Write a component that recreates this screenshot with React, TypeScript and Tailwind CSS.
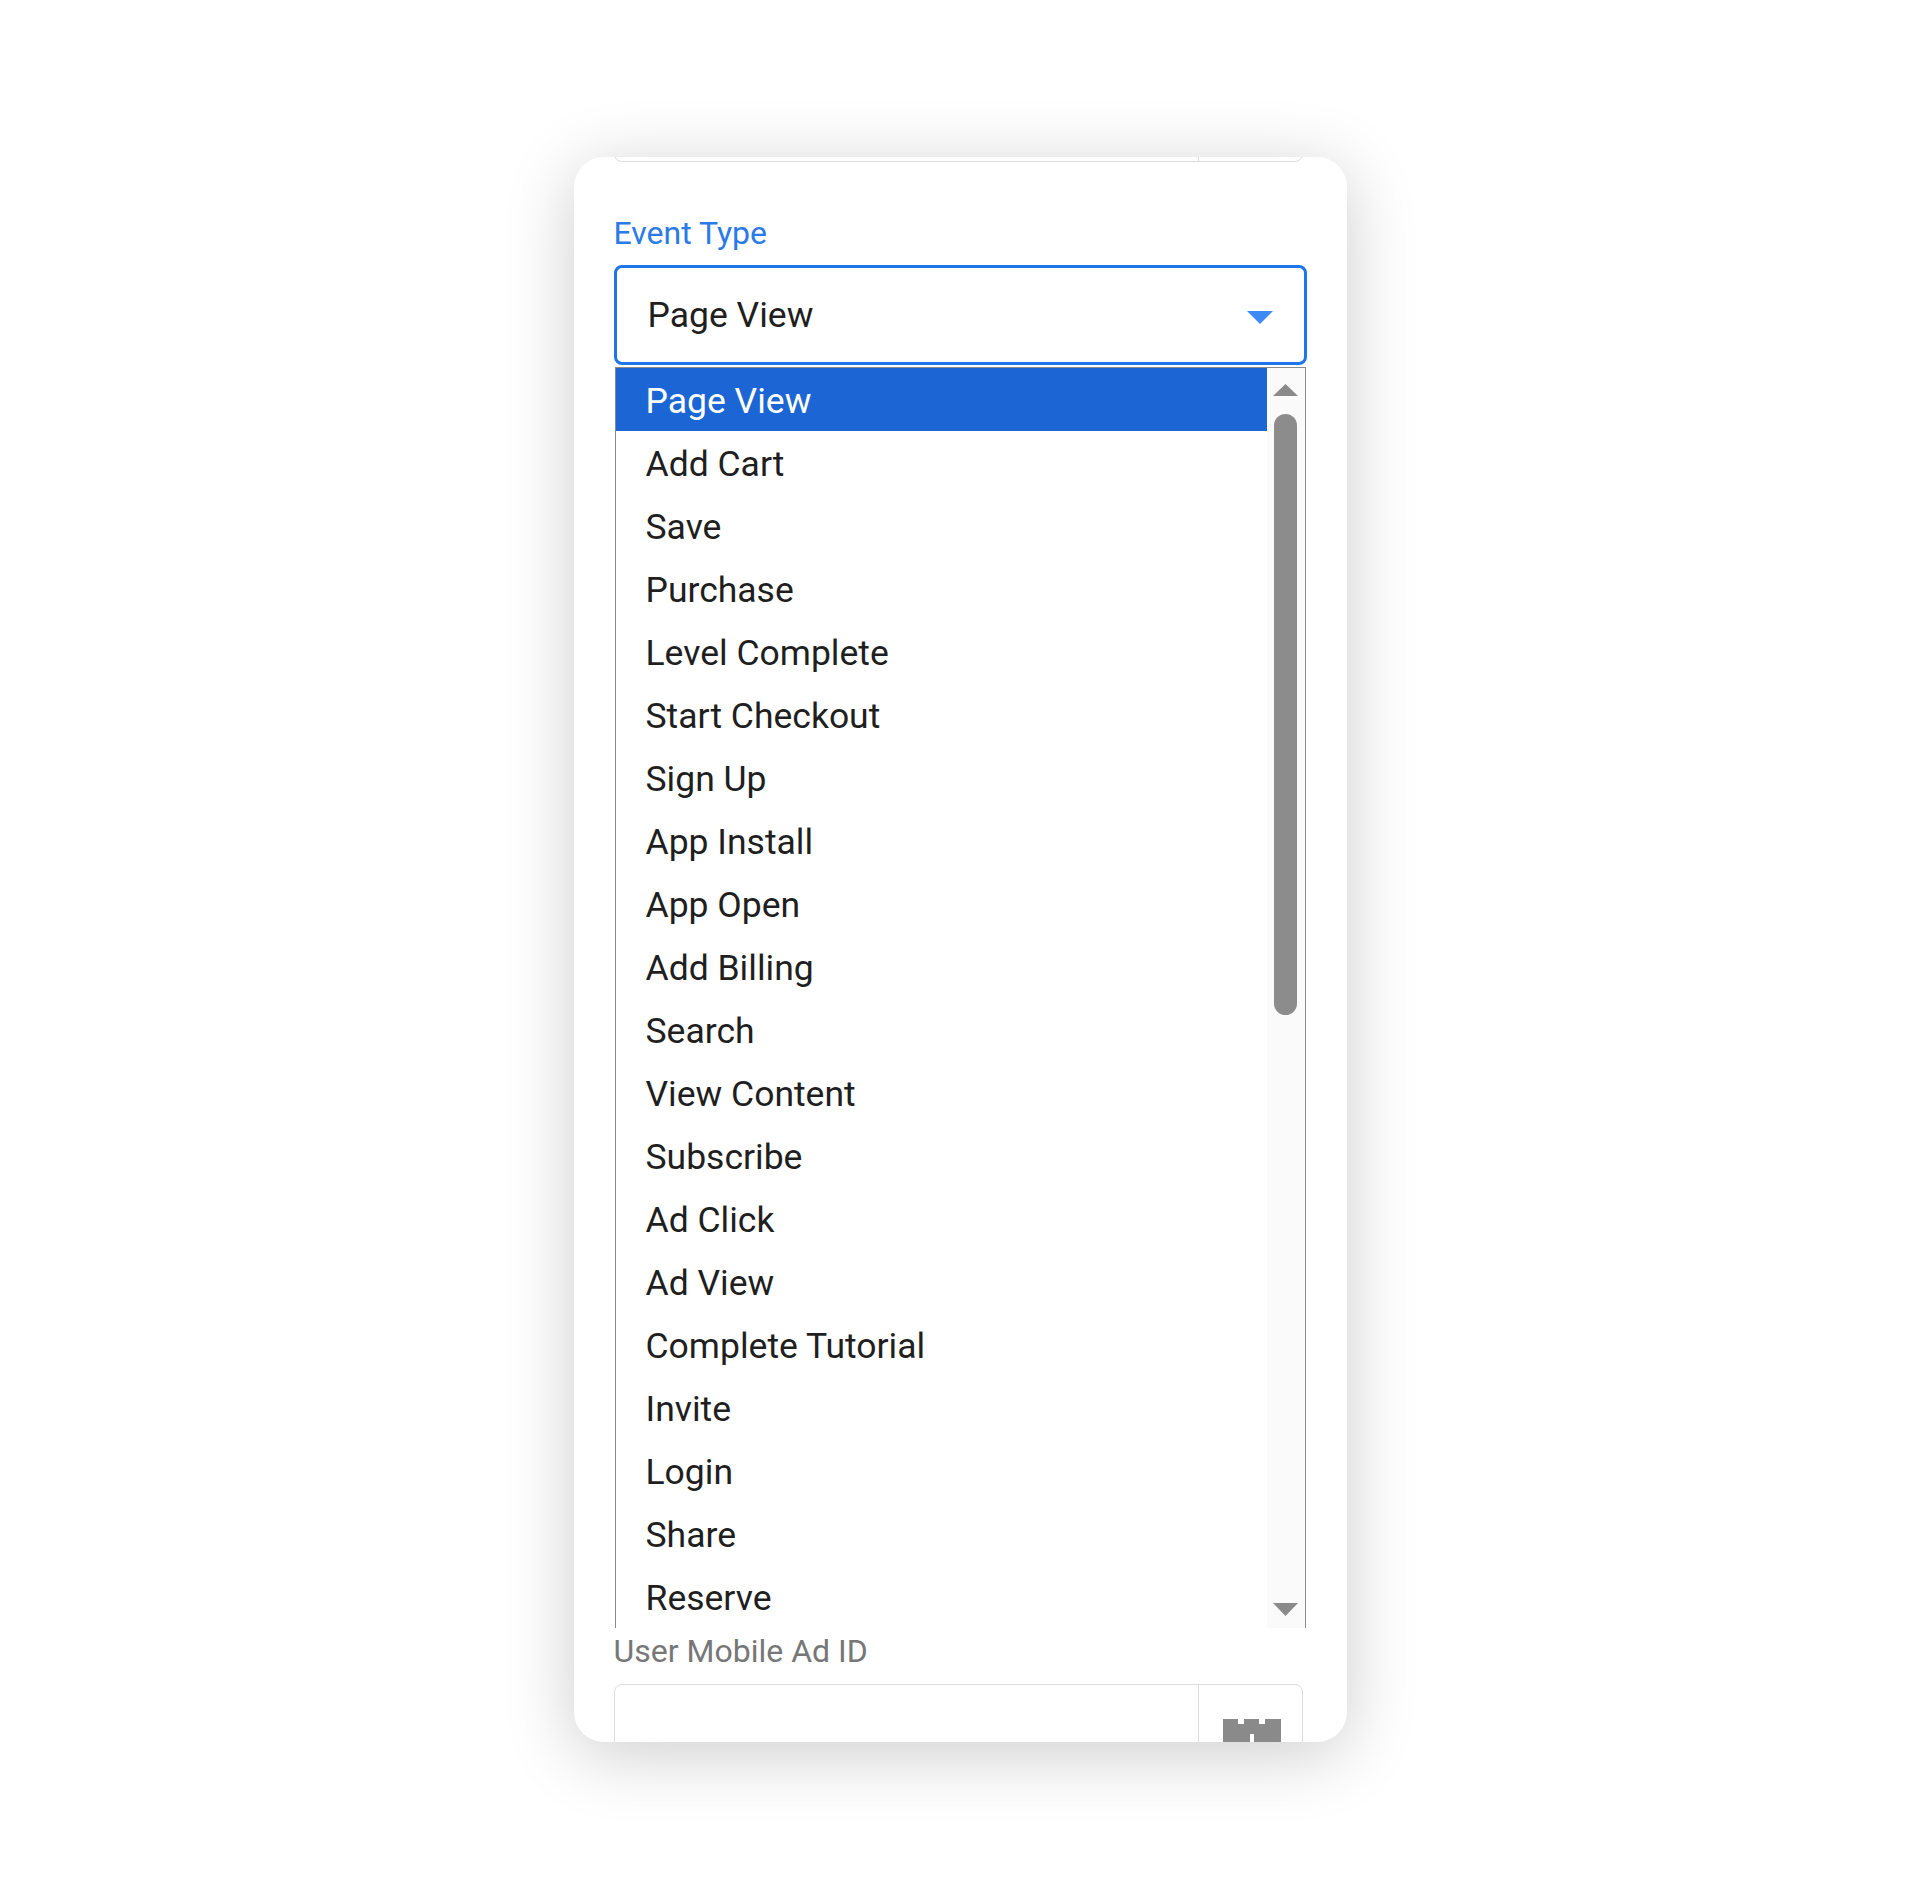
import React from "react";

const items = [
  "Page View",
  "Add Cart",
  "Save",
  "Purchase",
  "Level Complete",
  "Start Checkout",
  "Sign Up",
  "App Install",
  "App Open",
  "Add Billing",
  "Search",
  "View Content",
  "Subscribe",
  "Ad Click",
  "Ad View",
  "Complete Tutorial",
  "Invite",
  "Login",
  "Share",
  "Reserve",
];

function CalendarPlus() {
  return (
    <svg width="58" height="50" viewBox="0 0 58 50" fill="none">
      <rect x="0" y="0" width="15" height="8" fill="#8a8a8a" />
      <rect x="21" y="0" width="15" height="8" fill="#8a8a8a" />
      <rect x="42" y="0" width="16" height="8" fill="#8a8a8a" />
      <rect x="0" y="5" width="58" height="45" fill="#8a8a8a" />
      <rect x="27" y="15" width="4" height="22" fill="#ffffff" />
      <rect x="18" y="24" width="22" height="4" fill="#ffffff" />
    </svg>
  );
}

export default function App() {
  return (
    <div className="min-h-[1900px] w-full bg-white font-[Roboto,sans-serif] flex justify-center pt-[157px]">
      <div className="w-[773px] h-[1585px] bg-white rounded-[30px] overflow-hidden shadow-[0_12px_70px_rgba(0,0,0,0.2)] px-[40px] flex flex-col">
        {/* top clipped input */}
        <div className="mt-[-93px] h-[98px] w-[689px] border border-[#dcdcdc] rounded-[8px] flex shrink-0">
          <div className="flex-1" />
          <div className="w-[104px] border-l border-[#dcdcdc]" />
        </div>

        <div className="mt-[53px] text-[32px] leading-[37px] text-[#2a7ae8]">Event Type</div>

        <div className="mt-[13px] h-[100px] w-[693px] border-[3px] border-[#1f75ea] rounded-[8px] flex items-center justify-between pl-[31px] pr-[31px] pt-[2px] shrink-0">
          <span className="text-[35.5px] text-[#1f1f1f]">Page View</span>
          <svg width="26" height="13" viewBox="0 0 26 13" className="mt-[3px]">
            <polygon points="0,0 26,0 13,13" fill="#3d8af7" />
          </svg>
        </div>

        {/* open list */}
        <div className="mt-[2px] ml-[1px] w-[691px] h-[1261px] border-t border-l border-r border-[#8a8a8a] flex shrink-0">
          <div className="flex-1 overflow-hidden">
            {items.map((it, i) => (
              <div
                key={it}
                className={
                  i === 0
                    ? "h-[63px] pt-[3px] leading-[60px] pl-[30px] text-[35.5px] bg-[#1b66d4] text-white"
                    : "h-[63px] pt-[3px] leading-[60px] pl-[30px] text-[35.5px] text-[#1f1f1f]"
                }
              >
                {it}
              </div>
            ))}
          </div>
          <div className="w-[38px] bg-[#fafafa] flex flex-col items-center pt-[16px] pb-[12px]">
            <svg width="25" height="12" viewBox="0 0 25 12">
              <polygon points="12.5,0 25,12 0,12" fill="#8a8a8a" />
            </svg>
            <div className="mt-[18px] w-[23px] h-[601px] rounded-full bg-[#8c8c8c]" />
            <div className="flex-1" />
            <svg width="25" height="13" viewBox="0 0 25 13">
              <polygon points="0,0 25,0 12.5,13" fill="#8a8a8a" />
            </svg>
          </div>
        </div>

        <div className="mt-[5px] text-[32px] leading-[37px] text-[#777777]">User Mobile Ad ID</div>

        <div className="mt-[14px] h-[98px] w-[689px] border border-[#dcdcdc] rounded-[8px] flex shrink-0">
          <div className="flex-1" />
          <div className="w-[104px] border-l border-[#dcdcdc] flex justify-center pt-[34px] pl-[3px]">
            <CalendarPlus />
          </div>
        </div>
      </div>
    </div>
  );
}
